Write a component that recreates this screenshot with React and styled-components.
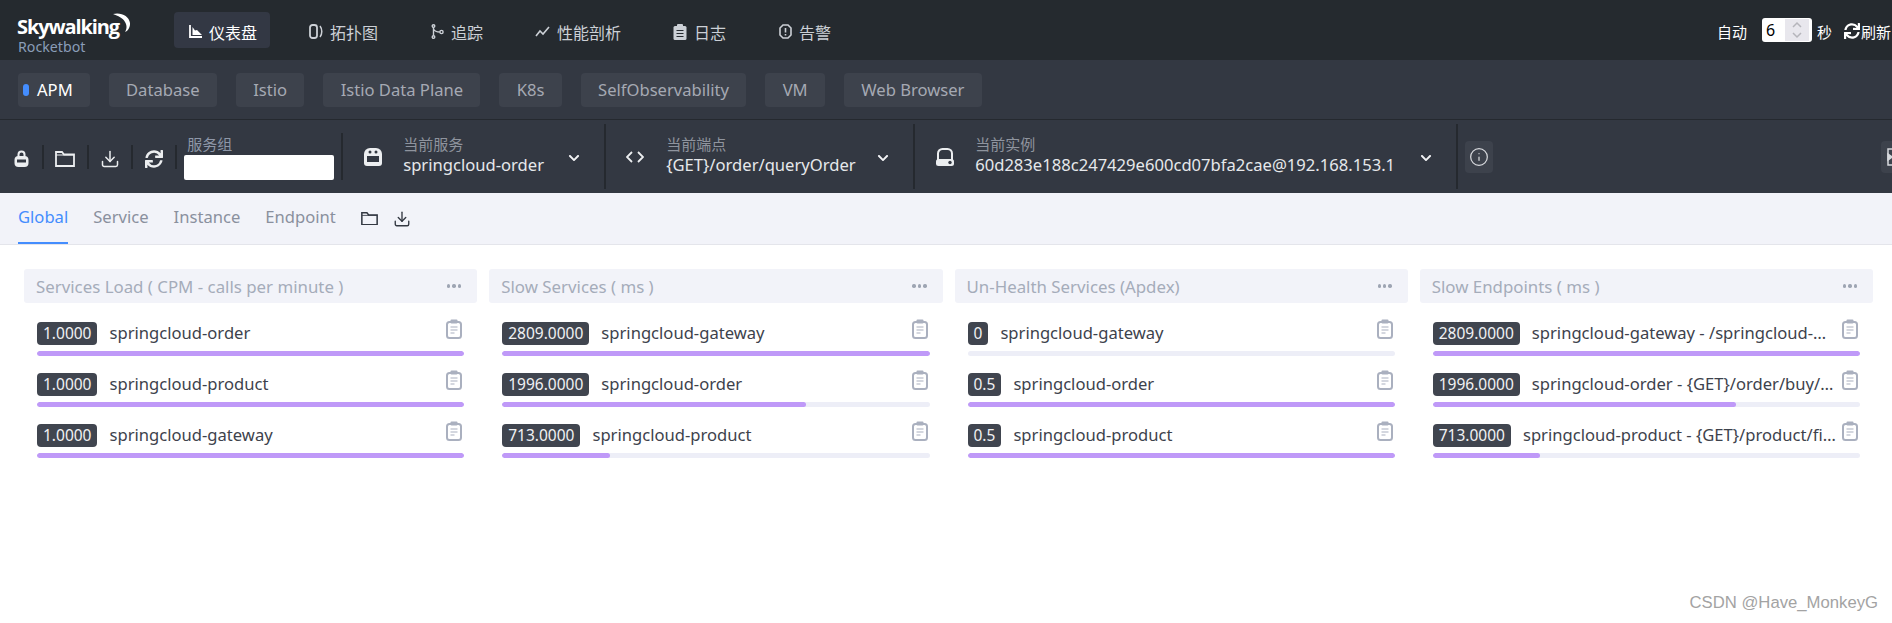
import styled, { createGlobalStyle } from "styled-components";
import { FaSync, FaChevronDown } from "react-icons/fa";
import { Download, Info } from "lucide-react";

const GlobalStyle = createGlobalStyle`
  html, body {
    margin: 0;
    background: #fff;
    overflow: hidden;
  }
  body {
    font-family: "Noto Sans", "Noto Sans CJK SC", sans-serif;
    font-size: 16.6px;
  }
  * { box-sizing: border-box; }
`;

const Page = styled.div`
  width: 1892px;
  height: 623px;
  position: relative;
  overflow: hidden;
`;

/* ---------- top nav ---------- */
const TopBar = styled.header`
  height: 60px;
  background: #252a2f;
  display: flex;
  align-items: center;
  color: #ccd0d6;
`;
const Logo = styled.div`
  width: 174px;
  padding: 15px 0 0 17px;
  position: relative;
  height: 60px;
`;
const LogoName = styled.div`
  font-family: "Open Sans", sans-serif;
  font-weight: 700;
  font-size: 20px;
  line-height: 24px;
  letter-spacing: -1.1px;
  color: #fff;
`;
const LogoSub = styled.div`
  font-size: 14.2px;
  line-height: 16px;
  color: #8a9db8;
  padding-left: 1px;
`;
const Moon = styled.svg`
  position: absolute;
  left: 112px;
  top: 13px;
`;
const NavItem = styled.div`
  display: flex;
  align-items: center;
  gap: 7px;
  height: 36px;
  font-size: 16px;
  padding: 3px ${(p) => p.$right}px 0 ${(p) => p.$left}px;
  border-radius: 4px;
  background: ${(p) => (p.$active ? "#333844" : "transparent")};
  color: ${(p) => (p.$active ? "#fff" : "#ccd0d6")};
  white-space: nowrap;
`;
const TopRight = styled.div`
  margin-left: auto;
  margin-right: 1px;
  display: flex;
  align-items: center;
  color: #fff;
  font-size: 15px;
  white-space: nowrap;
  padding-top: 2px;
`;
const NumBox = styled.div`
  width: 50px;
  height: 24px;
  margin: -2px 5px 0 15px;
  background: #fff;
  border-radius: 3px;
  color: #000;
  font-size: 16px;
  display: flex;
  align-items: center;
  padding-left: 4px;
  position: relative;
`;
const Spin = styled.div`
  position: absolute;
  right: 3px;
  top: 1px;
  width: 24px;
  height: 22px;
  background: #e8e7ed;
  display: flex;
  align-items: center;
  justify-content: center;
`;
const RefreshText = styled.span`
  display: flex;
  align-items: center;
  margin-left: 12px;
  gap: 1px;
`;

/* ---------- layer tabs ---------- */
const LayerBar = styled.div`
  height: 60px;
  background: #333842;
  border-bottom: 1px solid #25292f;
  display: flex;
  align-items: center;
  gap: 19px;
  padding: 6px 18px;
`;
const Layer = styled.div`
  height: 34px;
  padding: 0 ${(p) => (p.$active ? "17px 0 5px" : "17.3px")};
  background: #3d424c;
  border-radius: 4px;
  display: flex;
  align-items: center;
  gap: 8px;
  color: ${(p) => (p.$active ? "#fff" : "#a5a9b3")};
  white-space: nowrap;
`;
const Dot = styled.span`
  width: 6px;
  height: 12px;
  border-radius: 3px;
  background: #448dfe;
`;

/* ---------- selector toolbar ---------- */
const ToolBar = styled.div`
  height: 73px;
  background: #333842;
  display: flex;
  align-items: center;
  overflow: hidden;
  color: #e6e8eb;
`;
const ToolBtn = styled.div`
  width: 44.3px;
  height: 24px;
  border-right: 2px solid #25292f;
  display: flex;
  align-items: center;
  justify-content: center;
  color: #eceef0;
  flex: none;
  svg {
    margin-top: 4px;
  }
`;
const Group = styled.div`
  width: 166px;
  height: 47px;
  padding-left: 7px;
  border-right: 2px solid #25292f;
  flex: none;
`;
const GroupLabel = styled.div`
  font-size: 15px;
  line-height: 19px;
  color: #8e97a8;
  padding-left: 3px;
  margin-top: 2px;
`;
const GroupInput = styled.div`
  width: 150px;
  height: 25px;
  background: #fff;
  border-radius: 2px;
  margin-top: 1px;
`;
const Selector = styled.div`
  width: ${(p) => p.$w}px;
  height: 65px;
  border-right: 2px solid #25292f;
  flex: none;
  display: flex;
  align-items: center;
  padding: 0 24px 0 ${(p) => p.$left || 21}px;
`;
const SelIcon = styled.div`
  width: ${(p) => p.$w || 39}px;
  flex: none;
  display: flex;
  align-items: center;
  color: #eceef0;
  margin-top: 1px;
`;
const SelText = styled.div`
  flex: 1;
  min-width: 0;
  white-space: nowrap;
  margin-top: -1px;
`;
const SelLabel = styled.div`
  font-size: 15px;
  line-height: 17px;
  margin-top: -1px;
  margin-bottom: 1px;
  color: #8f949e;
`;
const SelValue = styled.div`
  line-height: 22px;
  color: #e6e8eb;
`;
const Chevron = styled(FaChevronDown)`
  flex: none;
  margin-top: 3px;
  color: #f2f3f5;
`;
const IconBtn = styled.div`
  width: 28px;
  height: 32px;
  background: #3d424c;
  border-radius: 4px;
  display: flex;
  align-items: center;
  justify-content: ${(p) => (p.$start ? "flex-start" : "center")};
  padding-left: ${(p) => (p.$start ? 6 : 0)}px;
  margin-left: ${(p) => p.$left}px;
  flex: none;
  overflow: hidden;
  color: #d6d8dc;
`;

/* ---------- dashboard tabs ---------- */
const TabBar = styled.div`
  height: 52px;
  background: #f2f3f9;
  border-bottom: 1px solid #e4e5eb;
  display: flex;
  padding-left: 18px;
  gap: 25px;
  align-items: stretch;
`;
const Tab = styled.div`
  line-height: 48px;
  height: 51px;
  border-bottom: 2px solid ${(p) => (p.$active ? "#448dfe" : "transparent")};
  color: ${(p) => (p.$active ? "#448dfe" : "#8a909e")};
`;
const TabTools = styled.div`
  display: flex;
  align-items: center;
  gap: 15px;
  color: #333842;
`;

/* ---------- cards ---------- */
const Grid = styled.div`
  display: grid;
  grid-template-columns: repeat(4, minmax(0, 1fr));
  column-gap: 12px;
  padding: 24px 19px 0 24px;
`;
const CardHead = styled.div`
  height: 34px;
  background: #f2f3f9;
  border-radius: 3px;
  display: flex;
  align-items: center;
  justify-content: space-between;
  padding: 0 16px 0 12px;
  font-size: 16.85px;
  color: #a5acba;
`;
const HeadDots = styled.div`
  display: flex;
  gap: 2px;
  span {
    width: 3.4px;
    height: 3.4px;
    border-radius: 50%;
    background: #9ea5b3;
  }
`;
const List = styled.div`
  padding: 13px 13px 0;
`;
const Row = styled.div`
  margin-bottom: 11px;
`;
const Line = styled.div`
  height: 34px;
  display: flex;
  align-items: center;
  gap: 12px;
`;
const Badge = styled.span`
  flex: none;
  height: 23px;
  line-height: 23px;
  padding: 0 6px;
  font-size: 15.5px;
  background: #40454f;
  border-radius: 4px;
  color: #f0f1f3;
`;
const Name = styled.span`
  flex: 1;
  min-width: 0;
  margin-top: -2px;
  white-space: nowrap;
  overflow: hidden;
  text-overflow: ellipsis;
  color: #3d424c;
`;
const Copy = styled.svg`
  flex: none;
  align-self: flex-start;
  margin: 3px 2px 0 -6px;
`;
const Track = styled.div`
  height: 5px;
  margin-top: 1px;
  background: #edeef7;
  border-radius: 3px;
  overflow: hidden;
`;
const Fill = styled.div`
  height: 100%;
  background: #bf99f8;
  border-radius: 3px;
`;
const Watermark = styled.div`
  position: absolute;
  right: 14px;
  bottom: 10px;
  font-family: "Liberation Sans", sans-serif;
  font-size: 16.7px;
  line-height: 20px;
  color: #a3a3a3;
`;

/* ---------- icons ---------- */
const DashIcon = () => (
  <svg width="13" height="13" viewBox="0 0 13 13">
    <path d="M1 0v12h12" fill="none" stroke="#fff" strokeWidth="1.8" />
    <path d="M3.500 10V2l2.500 3.500L8 5l5 5z" fill="#fff" />
  </svg>
);
const TopoIcon = () => (
  <svg width="14" height="15" viewBox="0 0 14 15" fill="none" stroke="#ccd0d6">
    <rect x="1" y="1" width="7" height="13" rx="2.500" strokeWidth="1.800" />
    <path d="M11 2c2.400 3 2.400 8 0 11" strokeWidth="1.500" />
  </svg>
);
const TraceIcon = () => (
  <svg width="13" height="15" viewBox="0 0 13 15" fill="none" stroke="#ccd0d6" strokeWidth="1.400">
    <circle cx="2.500" cy="2" r="1.300" />
    <circle cx="2.500" cy="13" r="1.300" />
    <circle cx="10.500" cy="8" r="1.600" />
    <path d="M2.500 3.500v8M2.500 5c1 2 4 3 6.300 3" />
  </svg>
);
const ProfileIcon = () => (
  <svg width="15" height="11" viewBox="0 0 15 11" fill="none" stroke="#ccd0d6" strokeWidth="1.600">
    <path d="M1 10l4-5 3 3 6-7" />
  </svg>
);
const LogIcon = () => (
  <svg width="14" height="16" viewBox="0 0 14 16">
    <rect x="0.500" y="2" width="13" height="14" rx="1.500" fill="#ccd0d6" />
    <rect x="4" y="0" width="6" height="3.500" rx="1" fill="#ccd0d6" />
    <path d="M3.500 6.500h7M3.500 9.500h7M3.500 12.500h7" stroke="#252a2f" strokeWidth="1.200" />
  </svg>
);
const AlertIcon = () => (
  <svg width="13" height="15" viewBox="0 0 13 15" fill="none" stroke="#ccd0d6">
    <path d="M4 1h5l3 3v7l-3 3H4l-3-3V4z" strokeWidth="1.600" />
    <path d="M6.500 4v4.500M6.500 10v1.500" strokeWidth="1.600" />
  </svg>
);
const LockIcon = () => (
  <svg width="15" height="17" viewBox="0 0 15 17" fill="none">
    <path d="M4.500 7V4.500a3 3 0 0 1 6 0V7" stroke="#eceef0" strokeWidth="2" />
    <rect x="0.500" y="6" width="14" height="11" rx="4" fill="#eceef0" />
    <rect x="3" y="9.500" width="9" height="3" fill="#333842" />
  </svg>
);
const FolderIcon = ({ size = 20, color = "#eceef0" }) => (
  <svg width={size} height={size * 0.8} viewBox="0 0 20 16" fill="none" stroke={color} strokeWidth="1.800">
    <path d="M1 15V1h6l2 2.500h10V15z" />
    <path d="M1 4h18" strokeWidth="1" />
  </svg>
);
const ServiceIcon = () => (
  <svg width="18" height="18" viewBox="0 0 18 18">
    <path d="M6 0h6a6 6 0 0 1 6 6v9a3 3 0 0 1-3 3H3a3 3 0 0 1-3-3V6a6 6 0 0 1 6-6z" fill="#eceef0" />
    <circle cx="6" cy="4" r="1.500" fill="#333842" />
    <circle cx="12" cy="4" r="1.500" fill="#333842" />
    <rect x="3" y="8" width="12" height="6" fill="#333842" />
  </svg>
);
const CodeIcon = () => (
  <svg width="18" height="12" viewBox="0 0 18 12" fill="none" stroke="#eceef0" strokeWidth="1.800">
    <path d="M6 1L1 6l5 5M12 1l5 5-5 5" />
  </svg>
);
const InstanceIcon = () => (
  <svg width="18" height="18" viewBox="0 0 18 18">
    <path d="M2 13V5.500A4.500 4.500 0 0 1 6.500 1h5A4.500 4.500 0 0 1 16 5.500V13" fill="none" stroke="#eceef0" strokeWidth="2" />
    <rect x="0" y="11" width="18" height="7" rx="2.500" fill="#eceef0" />
    <circle cx="14" cy="14.500" r="1.700" fill="#333842" />
  </svg>
);
const PanelIcon = () => (
  <svg width="14" height="18" viewBox="0 0 14 18" fill="none" stroke="#d6d8dc" strokeWidth="1.500">
    <path d="M14 1H1v16h13" />
    <path d="M1 6l4 3-4 3z" fill="#d6d8dc" />
  </svg>
);
const Clip = () => (
  <Copy width="16" height="20" viewBox="0 0 16 20" fill="none">
    <rect x="1" y="3" width="14" height="16" rx="2.500" fill="#fff" stroke="#aab0bf" strokeWidth="2" />
    <rect x="4.500" y="0.500" width="7" height="4" rx="1" fill="#aab0bf" />
    <path d="M4.500 8h7M4.500 11h7M4.500 14h4" stroke="#aab0bf" strokeWidth="1.200" />
  </Copy>
);

const navItems = [
  { label: "仪表盘", icon: <DashIcon />, left: 15, right: 13, active: true },
  { label: "拓扑图", icon: <TopoIcon />, left: 39, right: 53 },
  { label: "追踪", icon: <TraceIcon />, left: 0, right: 52 },
  { label: "性能剖析", icon: <ProfileIcon />, left: 0, right: 52 },
  { label: "日志", icon: <LogIcon />, left: 0, right: 53 },
  { label: "告警", icon: <AlertIcon />, left: 0, right: 0 },
];

const selectors = [
  { w: 263, label: "当前服务", value: "springcloud-order", icon: <ServiceIcon /> },
  { w: 309, left: 20, label: "当前端点", value: "{GET}/order/queryOrder", icon: <CodeIcon />, iw: 40 },
  { w: 543, label: "当前实例", value: "60d283e188c247429e600cd07bfa2cae@192.168.153.1", icon: <InstanceIcon /> },
];

const cards = [
  {
    title: "Services Load ( CPM - calls per minute )",
    rows: [
      ["1.0000", "springcloud-order", 100],
      ["1.0000", "springcloud-product", 100],
      ["1.0000", "springcloud-gateway", 100],
    ],
  },
  {
    title: "Slow Services ( ms )",
    rows: [
      ["2809.0000", "springcloud-gateway", 100],
      ["1996.0000", "springcloud-order", 71],
      ["713.0000", "springcloud-product", 25.2],
    ],
  },
  {
    title: "Un-Health Services (Apdex)",
    rows: [
      ["0", "springcloud-gateway", 0],
      ["0.5", "springcloud-order", 100],
      ["0.5", "springcloud-product", 100],
    ],
  },
  {
    title: "Slow Endpoints ( ms )",
    rows: [
      ["2809.0000", "springcloud-gateway - /springcloud-order/order/queryOrder", 100],
      ["1996.0000", "springcloud-order - {GET}/order/buy/{productId}", 71],
      ["713.0000", "springcloud-product - {GET}/product/findById", 25.2],
    ],
  },
];

const App = () => {
  return (
    <Page>
      <GlobalStyle />
      <TopBar>
        <Logo>
          <LogoName>Skywalking</LogoName>
          <LogoSub>Rocketbot</LogoSub>
          <Moon width="19" height="20" viewBox="0 0 19 20">
            <path d="M1 1c8-2 16 2 17 9 .3 4-2 8-5 9 2-3 2-7 0-10C11 5 6 3 1 1z" fill="#fff" />
          </Moon>
        </Logo>
        {navItems.map((n) => (
          <NavItem key={n.label} $active={n.active} $left={n.left} $right={n.right}>
            {n.icon}
            {n.label}
          </NavItem>
        ))}
        <TopRight>
          自动
          <NumBox>
            6
            <Spin>
              <svg width="12" height="18" viewBox="0 0 12 18" fill="none" stroke="#b5b5bb" strokeWidth="1.500">
                <path d="M2 6l4-4 4 4M2 12l4 4 4-4" />
              </svg>
            </Spin>
          </NumBox>
          秒
          <RefreshText>
            <FaSync size={16} />
            刷新
          </RefreshText>
        </TopRight>
      </TopBar>

      <LayerBar>
        <Layer $active>
          <Dot />
          APM
        </Layer>
        <Layer>Database</Layer>
        <Layer>Istio</Layer>
        <Layer>Istio Data Plane</Layer>
        <Layer>K8s</Layer>
        <Layer>SelfObservability</Layer>
        <Layer>VM</Layer>
        <Layer>Web Browser</Layer>
      </LayerBar>

      <ToolBar>
        <ToolBtn><LockIcon /></ToolBtn>
        <ToolBtn><FolderIcon /></ToolBtn>
        <ToolBtn><Download size={20} strokeWidth={1.8} /></ToolBtn>
        <ToolBtn><FaSync size={18} /></ToolBtn>
        <Group>
          <GroupLabel>服务组</GroupLabel>
          <GroupInput />
        </Group>
        {selectors.map((s) => (
          <Selector key={s.label} $w={s.w} $left={s.left}>
            <SelIcon $w={s.iw}>{s.icon}</SelIcon>
            <SelText>
              <SelLabel>{s.label}</SelLabel>
              <SelValue>{s.value}</SelValue>
            </SelText>
            <Chevron size={12} />
          </Selector>
        ))}
        <IconBtn $left={7}><Info size={20} strokeWidth={1.5} /></IconBtn>
        <IconBtn $left={388} $start><PanelIcon /></IconBtn>
      </ToolBar>

      <TabBar>
        <Tab $active>Global</Tab>
        <Tab>Service</Tab>
        <Tab>Instance</Tab>
        <Tab>Endpoint</Tab>
        <TabTools>
          <FolderIcon size={17} color="#333842" />
          <Download size={18} strokeWidth={1.8} />
        </TabTools>
      </TabBar>

      <Grid>
        {cards.map((card) => (
          <div key={card.title}>
            <CardHead>
              {card.title}
              <HeadDots><span /><span /><span /></HeadDots>
            </CardHead>
            <List>
              {card.rows.map((row) => (
                <Row key={row[1]}>
                  <Line>
                    <Badge>{row[0]}</Badge>
                    <Name>{row[1]}</Name>
                    <Clip />
                  </Line>
                  <Track>
                    <Fill style={{ width: `${row[2]}%` }} />
                  </Track>
                </Row>
              ))}
            </List>
          </div>
        ))}
      </Grid>

      <Watermark>CSDN @Have_MonkeyG</Watermark>
    </Page>
  );
};

export default App;
